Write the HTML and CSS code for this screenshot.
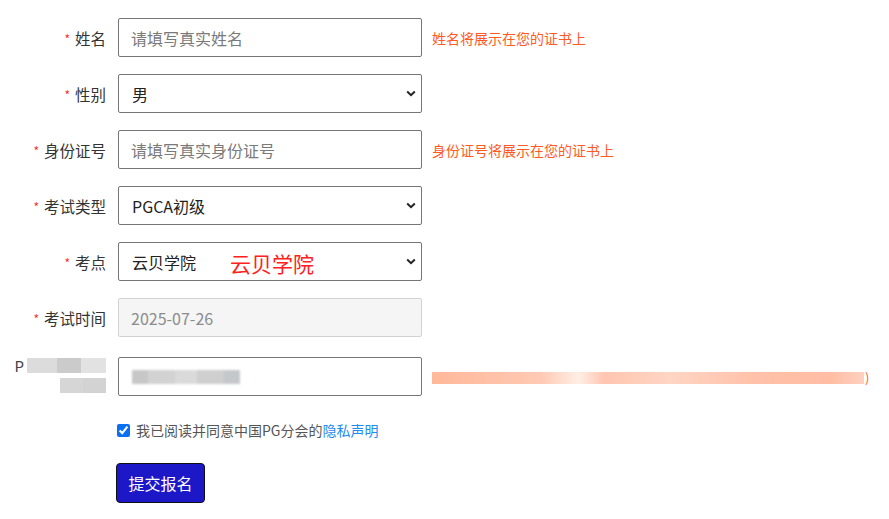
FILE: index.html
```html
<!DOCTYPE html>
<html lang="zh">
<head>
<meta charset="utf-8">
<link rel="stylesheet" href="styles.css">
</head>
<body>
<form class="form">
  <div class="row">
    <label class="label"><span class="req">*</span>姓名</label>
    <input class="field" type="text" placeholder="请填写真实姓名">
    <span class="hint">姓名将展示在您的证书上</span>
  </div>
  <div class="row">
    <label class="label"><span class="req">*</span>性别</label>
    <select class="field select"><option>男</option></select>
  </div>
  <div class="row">
    <label class="label"><span class="req">*</span>身份证号</label>
    <input class="field" type="text" placeholder="请填写真实身份证号">
    <span class="hint">身份证号将展示在您的证书上</span>
  </div>
  <div class="row">
    <label class="label"><span class="req">*</span>考试类型</label>
    <select class="field select"><option>PGCA初级</option></select>
  </div>
  <div class="row">
    <label class="label"><span class="req">*</span>考点</label>
    <div class="select-wrap">
      <select class="field select"><option>云贝学院</option></select>
      <span class="stamp">云贝学院</span>
    </div>
  </div>
  <div class="row">
    <label class="label"><span class="req">*</span>考试时间</label>
    <input class="field disabled" type="text" value="2025-07-26" disabled>
  </div>
  <div class="row row-blur">
    <div class="label blur-label">
      <div class="bl1"><span class="p">P</span><i class="m m1"></i><i class="m m2"></i><i class="m m3"></i></div>
      <div class="bl2"><i class="m m4"></i><i class="m m5"></i></div>
    </div>
    <div class="field blur-field"><i class="mosaic"></i></div>
    <div class="blur-hint"><i class="salmon"></i><span class="paren">)</span></div>
  </div>
  <div class="agree">
    <input type="checkbox" class="check" checked>
    <span>我已阅读并同意中国PG分会的<a class="link">隐私声明</a></span>
  </div>
  <div class="actions">
    <button type="button" class="btn">提交报名</button>
  </div>
</form>
</body>
</html>
```
FILE: styles.css
```css
* { box-sizing: border-box; }
body {
  margin: 0;
  background: #fff;
  font-family: "Noto Sans CJK SC", "Noto Sans", sans-serif;
  color: #333;
}
.form {
  padding: 18px 0 0 0;
  display: flex;
  flex-direction: column;
}
.row {
  display: flex;
  align-items: center;
  height: 39px;
  margin-bottom: 17px;
}
.label {
  width: 106px;
  text-align: right;
  font-size: 15.5px;
  color: #333;
  margin-right: 12px;
  flex: none;
}
.req {
  color: #ff2a2a;
  font-size: 12px;
  margin-right: 5px;
  position: relative;
  top: -1px;
}
.field {
  width: 304px;
  height: 39px;
  border: 1px solid #767676;
  border-radius: 2px;
  padding: 0 12px;
  font-family: "Noto Sans CJK SC", "Noto Sans", sans-serif;
  font-size: 16px;
  color: #222;
  background: #fff;
  outline: none;
  flex: none;
}
.field::placeholder { color: #7a7a7a; }
.select {
  appearance: none;
  -webkit-appearance: none;
  padding-left: 13px;
  background-image: url("data:image/svg+xml,%3Csvg xmlns='http://www.w3.org/2000/svg' width='10' height='7' viewBox='0 0 10 7'%3E%3Cpath d='M1.2 1.5 L5 5.2 L8.8 1.5' fill='none' stroke='%23222' stroke-width='2'/%3E%3C/svg%3E");
  background-repeat: no-repeat;
  background-position: right 5px center;
}
.disabled {
  background: #f5f5f5;
  border-color: #d3d3d3;
  color: #8c8c8c;
}
.hint {
  margin-left: 10px;
  font-size: 14px;
  color: #ff5a1f;
}
.select-wrap { position: relative; }
.stamp {
  position: absolute;
  left: 112px;
  top: 6px;
  font-size: 21px;
  color: #ff2020;
  pointer-events: none;
}
.row-blur { margin-top: 3px; margin-bottom: 24px; }
.blur-label {
  display: flex;
  flex-direction: column;
  align-items: flex-end;
  height: 39px;
  position: relative;
  top: -2px;
}
.bl1, .bl2 { display: flex; align-items: center; height: 21px; }
.p { font-size: 15px; color: #444; margin-right: 3px; }
.m { display: block; height: 15px; filter: blur(0.6px); }
.m1 { width: 30px; background: #dcdcdc; }
.m2 { width: 24px; background: #cbcbcb; }
.m3 { width: 25px; background: #e2e2e2; }
.m4 { width: 23px; background: #d6d6d6; }
.m5 { width: 23px; background: #d3d3d3; }
.blur-field { display: flex; align-items: center; padding: 0 0 0 13px; }
.mosaic {
  display: block;
  width: 108px;
  height: 14px;
  background: linear-gradient(90deg, #c7c7c7 0 15%, #d2d2d2 15% 40%, #dadada 40% 60%, #cfcfcf 60% 85%, #c5c8cb 85%);
  filter: blur(0.8px);
}
.blur-hint {
  display: flex;
  align-items: center;
  margin-left: 10px;
  position: relative;
  top: 1px;
}
.salmon {
  display: block;
  width: 432px;
  height: 12px;
  background: linear-gradient(90deg, #ffb89a 0%, #ffc9b3 25%, #ffeee6 34%, #ffc6b0 40%, #ffd5c4 55%, #ffc1a9 75%, #ffbda4 92%, #ffd0c0 100%);
  filter: blur(0.6px);
}
.paren { font-size: 13px; color: #ff5a1f; margin-left: 1px; }
.agree {
  display: flex;
  align-items: center;
  margin-left: 117px;
  font-size: 14px;
  color: #555;
}
.check {
  width: 13px;
  height: 13px;
  margin: 0 6px 0 0;
  accent-color: #0b6ff2;
}
.link { color: #1d8cf0; text-decoration: none; }
.actions { margin: 23px 0 0 116px; }
.btn {
  width: 89px;
  height: 40px;
  background: #1c18c7;
  border: 1px solid #111;
  border-radius: 4px;
  color: #fff;
  font-family: "Noto Sans CJK SC", "Noto Sans", sans-serif;
  font-size: 16px;
  padding: 0;
}
```
